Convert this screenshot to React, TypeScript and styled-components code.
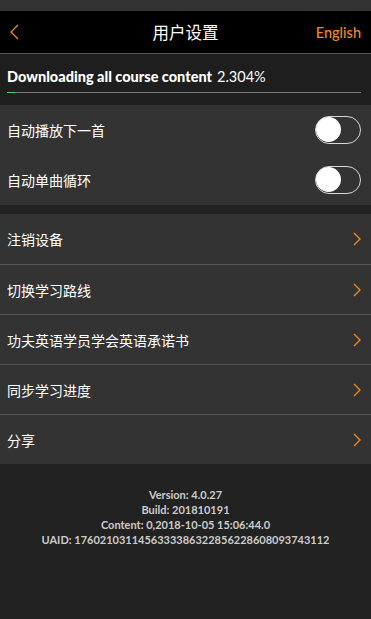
import styled, { createGlobalStyle } from "styled-components";

const GlobalStyle = createGlobalStyle`
  html, body {
    margin: 0;
    padding: 0;
    background: #222222;
  }
  body {
    font-family: "Noto Sans CJK SC", "Noto Sans", sans-serif;
  }
`;

const Page = styled.div`
  width: 371px;
  min-height: 619px;
  background: #222222;
  display: flex;
  flex-direction: column;
`;

const StatusStrip = styled.div`
  height: 11px;
  background: #333333;
`;

const Header = styled.div`
  height: 42px;
  background: #000000;
  border-bottom: 1px solid #555555;
  display: grid;
  grid-template-columns: 60px 1fr 60px;
  align-items: center;
  padding: 0 10px 0 10px;
`;

const BackButton = styled.div`
  display: flex;
  align-items: center;
`;

const Title = styled.div`
  text-align: center;
  color: #ffffff;
  font-size: 16.5px;
`;

const LangLink = styled.div`
  text-align: right;
  color: #f0891d;
  font-family: "Lato", "Noto Sans", sans-serif;
  font-size: 14.5px;
  font-weight: 500;
`;

const Download = styled.div`
  height: 50px;
  background: #1e1e1e;
  padding: 0 10px 0 7px;
  display: flex;
  flex-direction: column;
  justify-content: center;
`;

const DownloadText = styled.div`
  color: #ffffff;
  font-family: "Lato", "Noto Sans", sans-serif;
  font-weight: 900;
  font-size: 14.5px;
  line-height: 18px;
  margin-top: 2px;
  span {
    font-weight: 400;
    margin-left: 5px;
  }
`;

const ProgressTrack = styled.div`
  margin-top: 6px;
  height: 1px;
  background: #7a7a7a;
  display: flex;
`;

const ProgressFill = styled.div`
  background: #3cd57a;
  height: 1px;
`;

const Section = styled.div<{ $gap?: number }>`
  margin-top: ${(p) => p.$gap ?? 0}px;
  background: #333333;
`;

const Row = styled.div<{ $divider?: boolean }>`
  height: 50px;
  box-sizing: border-box;
  padding: 0 10px 0 7px;
  display: flex;
  align-items: center;
  justify-content: space-between;
  border-top: ${(p) => (p.$divider ? "1px solid #555555" : "none")};
  color: #ffffff;
  font-size: 14px;
`;

const Switch = styled.div`
  width: 46px;
  height: 28px;
  box-sizing: border-box;
  border: 1.5px solid #d8d8d8;
  border-radius: 14px;
  position: relative;
`;

const Knob = styled.div`
  position: absolute;
  left: 0;
  top: 0;
  width: 25px;
  height: 25px;
  border-radius: 50%;
  background: #ffffff;
`;

const Footer = styled.div`
  flex: 1;
  padding-top: 23px;
  display: flex;
  flex-direction: column;
  align-items: center;
  color: #cccccc;
  font-family: "Lato", "Noto Sans", sans-serif;
  font-weight: 700;
  font-size: 11px;
  line-height: 15px;
`;

const Chevron = ({ size = 8, height = 14, stroke = 1.4, dir = "right" }: { size?: number; height?: number; stroke?: number; dir?: "left" | "right" }) => (
  <svg width={size} height={height} viewBox={`0 0 ${size} ${height}`} fill="none">
    <path
      d={dir === "right" ? `M1 1 L${size - 1} ${height / 2} L1 ${height - 1}` : `M${size - 1} 1 L1 ${height / 2} L${size - 1} ${height - 1}`}
      stroke="#f0891d"
      strokeWidth={stroke}
    />
  </svg>
);

const toggles = ["自动播放下一首", "自动单曲循环"];
const links = ["注销设备", "切换学习路线", "功夫英语学员学会英语承诺书", "同步学习进度", "分享"];

export default function App() {
  const progress = 2.304;
  return (
    <Page>
      <GlobalStyle />
      <StatusStrip />
      <Header>
        <BackButton>
          <Chevron dir="left" size={9} height={16} stroke={1.3} />
        </BackButton>
        <Title>用户设置</Title>
        <LangLink>English</LangLink>
      </Header>
      <Download>
        <DownloadText>
          Downloading all course content<span>{progress}%</span>
        </DownloadText>
        <ProgressTrack>
          <ProgressFill style={{ width: `${progress}%` }} />
        </ProgressTrack>
      </Download>
      <Section $gap={1}>
        {toggles.map((t) => (
          <Row key={t}>
            {t}
            <Switch>
              <Knob />
            </Switch>
          </Row>
        ))}
      </Section>
      <Section $gap={9}>
        {links.map((l, i) => (
          <Row key={l} $divider={i > 0}>
            {l}
            <Chevron size={8} height={14} />
          </Row>
        ))}
      </Section>
      <Footer>
        <div>Version: 4.0.27</div>
        <div>Build: 201810191</div>
        <div>Content: 0,2018-10-05 15:06:44.0</div>
        <div>UAID: 1760210311456333386322856228608093743112</div>
      </Footer>
    </Page>
  );
}
